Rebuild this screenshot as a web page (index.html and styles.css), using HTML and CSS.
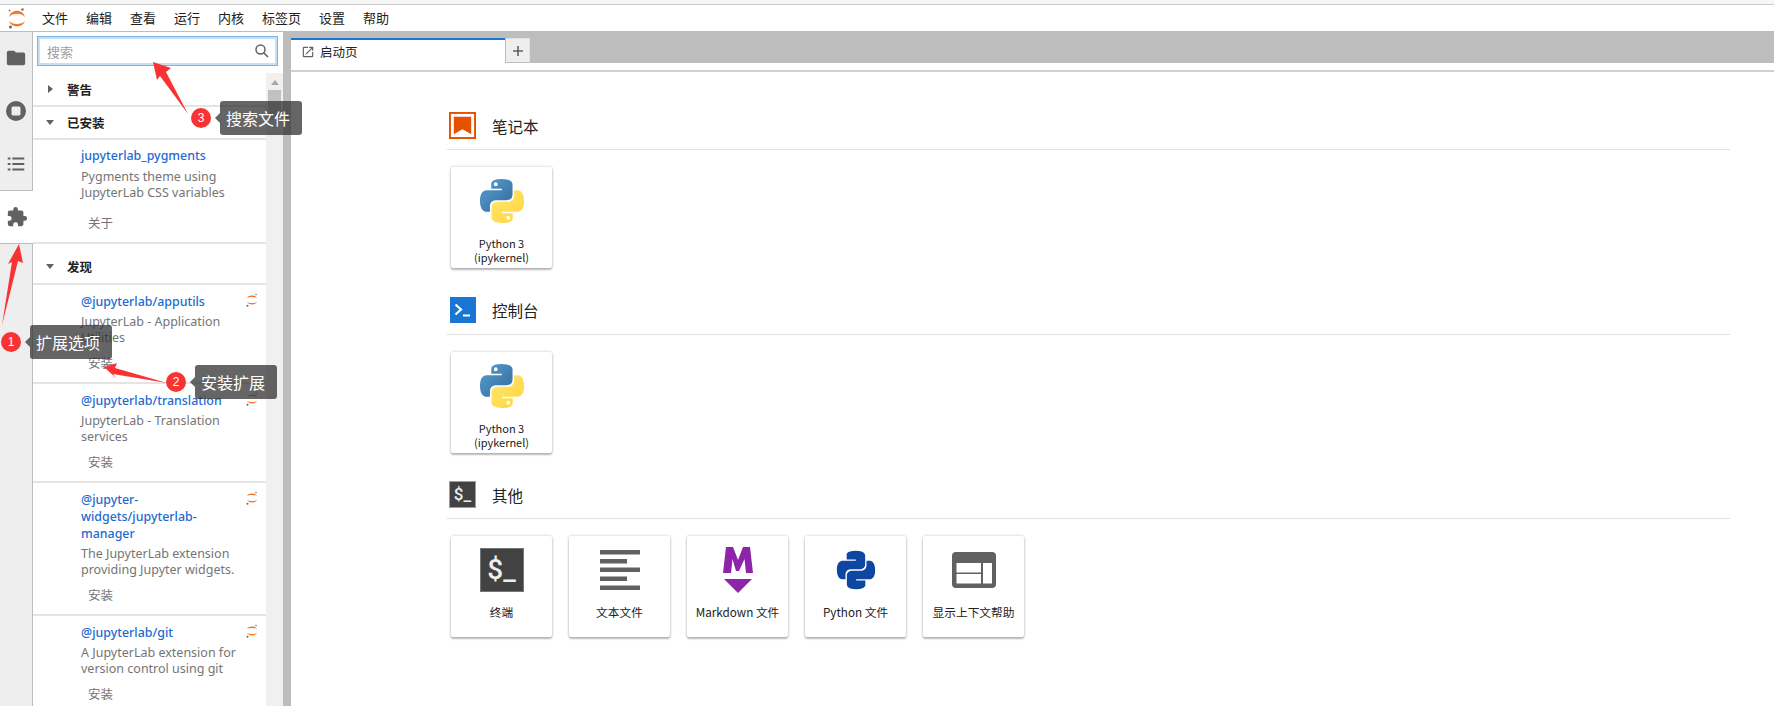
FILE: index.html
```html
<!DOCTYPE html>
<html lang="zh">
<head>
<meta charset="utf-8">
<title>JupyterLab</title>
<link rel="stylesheet" href="styles.css">
</head>
<body>
<div class="app">
  <header class="menubar">
    <svg class="logo" viewBox="0 0 18 22" width="18" height="22"><path d="M1 9C3 .5 15 .5 17 9C14 4.500 4 4.500 1 9Z" fill="#f37726"/><path d="M1 13C3 20 15 20 17 13C14 17 4 17 1 13Z" fill="#f37726"/><circle cx="14.500" cy="1.500" r="1.300" fill="#777"/><circle cx="2.500" cy="19" r="1.500" fill="#666"/><circle cx="1.500" cy="2.500" r="1" fill="#888"/></svg>
    <nav class="menus"><span>文件</span><span>编辑</span><span>查看</span><span>运行</span><span>内核</span><span>标签页</span><span>设置</span><span>帮助</span></nav>
  </header>
  <div class="body">
    <aside class="rail">
      <div class="rail-tabs">
        <div class="rail-item"><svg viewBox="0 0 24 24" width="22" height="22"><path fill="#616161" d="M10 4H4a2 2 0 0 0-2 2v12a2 2 0 0 0 2 2h16a2 2 0 0 0 2-2V8a2 2 0 0 0-2-2h-8z"/></svg></div>
        <div class="rail-item"><svg viewBox="0 0 24 24" width="24" height="24"><path fill="#616161" fill-rule="evenodd" d="M12 2a10 10 0 1 0 0 20 10 10 0 0 0 0-20zM9 7.500h6A1.500 1.500 0 0 1 16.500 9v6a1.500 1.500 0 0 1-1.500 1.500H9A1.500 1.500 0 0 1 7.500 15V9A1.500 1.500 0 0 1 9 7.500z"/></svg></div>
        <div class="rail-item"><svg viewBox="0 0 24 24" width="22" height="22"><path fill="#616161" d="M3 5h3v2H3zM8 5h13v2H8zM3 11h3v2H3zM8 11h13v2H8zM3 17h3v2H3zM8 17h13v2H8z"/></svg></div>
      </div>
      <div class="rail-item rail-active"><svg viewBox="0 0 24 24" width="22" height="22"><path fill="#616161" d="M20.500 11H19V7a2 2 0 0 0-2-2h-4V3.500a2.500 2.500 0 0 0-5 0V5H4a2 2 0 0 0-2 2v3.800h1.500a2.700 2.700 0 0 1 0 5.400H2V20a2 2 0 0 0 2 2h3.800v-1.500a2.700 2.700 0 0 1 5.400 0V22H17a2 2 0 0 0 2-2v-4h1.500a2.500 2.500 0 0 0 0-5z"/></svg></div>
      <div class="rail-rest"></div>
    </aside>

    <section class="panel">
      <div class="search-wrap">
        <div class="search">
          <span class="search-ph">搜索</span>
          <svg viewBox="0 0 24 24" width="18" height="18"><path fill="none" stroke="#616161" stroke-width="2" d="M10 4a6 6 0 1 0 0 12 6 6 0 0 0 0-12zM14.500 14.500L20 20"/></svg>
        </div>
      </div>
      <div class="scroller">
        <div class="list">
          <div class="sec sec-top"><i class="tri tri-r"></i>警告</div>
          <div class="sec"><i class="tri tri-d"></i>已安装</div>
          <article class="ext ext-first">
            <a class="ext-name">jupyterlab_pygments</a>
            <p class="ext-desc">Pygments theme using JupyterLab CSS variables</p>
            <span class="ext-btn">关于</span>
          </article>
          <div class="sec sec-tall"><i class="tri tri-d"></i>发现</div>
          <article class="ext">
            <a class="ext-name">@jupyterlab/apputils</a>
            <svg class="mini" viewBox="0 0 12 14"><use href="#mini"/></svg>
            <p class="ext-desc">JupyterLab - Application Utilities</p>
            <span class="ext-btn">安装</span>
          </article>
          <article class="ext">
            <a class="ext-name">@jupyterlab/translation</a>
            <svg class="mini" viewBox="0 0 12 14"><use href="#mini"/></svg>
            <p class="ext-desc">JupyterLab - Translation services</p>
            <span class="ext-btn">安装</span>
          </article>
          <article class="ext">
            <a class="ext-name">@jupyter-widgets/jupyterlab-manager</a>
            <svg class="mini" viewBox="0 0 12 14"><use href="#mini"/></svg>
            <p class="ext-desc">The JupyterLab extension providing Jupyter widgets.</p>
            <span class="ext-btn">安装</span>
          </article>
          <article class="ext">
            <a class="ext-name">@jupyterlab/git</a>
            <svg class="mini" viewBox="0 0 12 14"><use href="#mini"/></svg>
            <p class="ext-desc">A JupyterLab extension for version control using git</p>
            <span class="ext-btn">安装</span>
          </article>
        </div>
        <div class="scrollbar"><i class="sb-up"></i><b class="sb-thumb"></b></div>
      </div>
    </section>
    <div class="splitter"></div>

    <main class="main">
      <div class="tabbar">
        <div class="tab">
          <svg viewBox="0 0 24 24" width="14" height="14"><path fill="#616161" d="M19 19H5V5h7V3H5a2 2 0 0 0-2 2v14a2 2 0 0 0 2 2h14a2 2 0 0 0 2-2v-7h-2v7zM14 3v2h3.600l-9.800 9.800 1.400 1.400L19 6.400V10h2V3h-7z"/></svg>
          <span>启动页</span>
        </div>
        <div class="tab-add"><svg viewBox="0 0 12 12" width="12" height="12"><path stroke="#616161" stroke-width="1.600" d="M6 1v10M1 6h10"/></svg></div>
      </div>
      <div class="launcher">
        <section class="group">
          <header class="group-head">
            <svg class="kernel-ico" viewBox="0 0 28 28"><rect x="1" y="1" width="26" height="26" fill="#fff" stroke="#e65100" stroke-width="2"/><path fill="#e65100" d="M5 5h18v18l-9-5-9 5z"/></svg>
            <h2>笔记本</h2>
          </header>
          <div class="cards">
            <div class="card"><svg class="py" viewBox="0 0 48 48"><use href="#py"/></svg><span class="card-label label-two">Python 3<br>(ipykernel)</span></div>
          </div>
        </section>
        <section class="group">
          <header class="group-head">
            <svg class="kernel-ico ico-blue" viewBox="0 0 26 26"><rect width="26" height="26" fill="#1976d2"/><path fill="none" stroke="#fff" stroke-width="2.200" d="M5.500 7.500l5.500 5-5.500 5"/><path stroke="#fff" stroke-width="2" d="M13 18.500h7"/></svg>
            <h2>控制台</h2>
          </header>
          <div class="cards">
            <div class="card"><svg class="py" viewBox="0 0 48 48"><use href="#py"/></svg><span class="card-label label-two">Python 3<br>(ipykernel)</span></div>
          </div>
        </section>
        <section class="group">
          <header class="group-head">
            <div class="term-small"><span>$_</span></div>
            <h2>其他</h2>
          </header>
          <div class="cards">
            <div class="card"><div class="term-big"><span>$_</span></div><span class="card-label">终端</span></div>
            <div class="card">
              <svg class="ico ico-text" viewBox="0 0 44 44"><path fill="#616161" d="M2 2h40v4.500H2zM2 11h27v4.500H2zM2 19.500h40V24H2zM2 28.500h27V33H2zM2 37.500h40V42H2z"/></svg>
              <span class="card-label">文本文件</span>
            </div>
            <div class="card">
              <svg class="ico ico-md" viewBox="0 0 32 46"><path fill="#8e24aa" d="M1 26L4 0h7l5 13 5-13h7l3 26h-7l-1.500-14-5.500 12h-3L10.500 12 9 26z"/><path fill="#8e24aa" d="M2 32h28L16 46z"/></svg>
              <span class="card-label">Markdown 文件</span>
            </div>
            <div class="card">
              <svg class="ico ico-pyb" viewBox="0 0 48 48"><use href="#pyb"/></svg>
              <span class="card-label">Python 文件</span>
            </div>
            <div class="card">
              <svg class="ico ico-help" viewBox="0 0 44 36"><path fill="#616161" fill-rule="evenodd" d="M4 0h36a4 4 0 0 1 4 4v28a4 4 0 0 1-4 4H4a4 4 0 0 1-4-4V4a4 4 0 0 1 4-4zM4.500 11v9.500H29V11zM4.500 22v9.500H29V22zM31 11v20.500h9V11z"/></svg>
              <span class="card-label">显示上下文帮助</span>
            </div>
          </div>
        </section>
      </div>
    </main>
  </div>

  <svg class="arrows" viewBox="0 0 1774 706" width="1774" height="706">
    <g fill="#f83333">
      <path d="M153 62L171 68 166 72 188 114 160 76 157 80z"/>
      <path d="M19 244L23 263 18 261 2 325 12 262 8 264z"/>
      <path d="M104 367L117 363 115 368 167 383 113 374 116 378z"/>
    </g>
  </svg>
  <div class="note note-1"><b>1</b><span>扩展选项</span></div>
  <div class="note note-2"><b>2</b><span>安装扩展</span></div>
  <div class="note note-3"><b>3</b><span>搜索文件</span></div>
</div>

<svg class="defs" width="0" height="0">
  <defs>
    <g id="mini" fill="#f37726"><path d="M1 5C2.500 1.800 9.500 1.800 11 5 9 3.600 3 3.600 1 5zM1 9C2.500 12.200 9.500 12.200 11 9 9 10.400 3 10.400 1 9z"/><circle cx="1.500" cy="12.800" r="1" fill="#666"/><circle cx="10" cy="1.500" r=".8" fill="#777"/></g>
    <linearGradient id="pyblue" x1="0" y1="0" x2="1" y2="1"><stop offset="0" stop-color="#5a9fd4"/><stop offset="1" stop-color="#306998"/></linearGradient>
    <linearGradient id="pyyellow" x1="0" y1="0" x2="1" y2="1"><stop offset="0" stop-color="#ffe873"/><stop offset="1" stop-color="#ffd43b"/></linearGradient>
    <g id="py">
      <path fill="url(#pyblue)" fill-rule="evenodd" d="M23.600 1C12 1 12.800 6 12.800 6v5.300h11v1.600H8.400S1 12 1 23.800c0 11.800 6.500 11.400 6.500 11.400h3.900v-5.500s-.2-6.500 6.400-6.500h11s6.200.1 6.200-6V7S35.900 1 23.600 1zM17.500 4.500a2 2 0 1 1 0 4 2 2 0 0 1 0-4z"/>
      <path fill="url(#pyyellow)" fill-rule="evenodd" d="M24.400 47c11.600 0 10.800-5 10.800-5v-5.300h-11v-1.600h15.400S47 36 47 24.200c0-11.800-6.500-11.400-6.500-11.400h-3.900v5.500s.2 6.500-6.400 6.500h-11s-6.200-.1-6.200 6V41s-.9 6 11.400 6zM30.500 43.500a2 2 0 1 1 0-4 2 2 0 0 1 0 4z"/>
    </g>
    <g id="pyb" fill="#0d47a1">
      <path d="M23.600 1C12 1 12.800 6 12.800 6v5.300h11v1.600H8.400S1 12 1 23.800c0 11.800 6.500 11.400 6.500 11.400h3.900v-5.500s-.2-6.500 6.400-6.500h11s6.200.1 6.200-6V7S35.900 1 23.600 1z"/>
      <path d="M24.400 47c11.600 0 10.800-5 10.800-5v-5.300h-11v-1.600h15.400S47 36 47 24.200c0-11.800-6.500-11.400-6.500-11.400h-3.900v5.500s.2 6.500-6.400 6.500h-11s-6.200-.1-6.200 6V41s-.9 6 11.400 6z"/>
    </g>
  </defs>
</svg>
</body>
</html>
```

FILE: styles.css
```css
* { box-sizing: border-box; }
html, body { margin: 0; height: 100%; overflow: hidden; background: #fff; }
body { font-family: "Noto Sans CJK SC", "Noto Sans", sans-serif; color: #000; }
.defs { position: absolute; }
.app { position: relative; width: 1774px; height: 706px; display: flex; flex-direction: column; padding-top: 4px; overflow: hidden; }
.app::before { content: ""; position: absolute; left: 0; right: 0; top: 0; height: 4px; background: #f7f7f7; border-bottom: 1px solid #c8c8c8; }

.menubar { height: 27px; display: flex; align-items: center; padding: 0 0 0 8px; flex: none; }
.logo { display: block; flex: none; margin-top: 2px; }
.menus { display: flex; gap: 18px; margin-left: 16px; font-size: 13px; color: #212121; }

.body { flex: 1; display: flex; min-height: 0; border-top: 1px solid #bdbdbd; }

.rail { width: 33px; flex: none; display: flex; flex-direction: column; }
.rail-tabs { background: #eee; border-right: 1px solid #bdbdbd; border-bottom: 1px solid #bdbdbd; height: 159px; }
.rail-item { height: 53px; padding-bottom: 2px; display: flex; align-items: center; justify-content: center; }
.rail-active { height: 52px; padding-bottom: 0; }
.rail-rest { flex: 1; background: #eee; border-top: 1px solid #bdbdbd; border-right: 1px solid #bdbdbd; }

.panel { width: 250px; flex: none; display: flex; flex-direction: column; }
.search-wrap { height: 41px; padding: 4px 5px 0 4px; flex: none; }
.search { height: 30px; border: 1px solid #7fb3e0; box-shadow: inset 0 0 0 2px #c5e0f5; display: flex; align-items: center; justify-content: space-between; padding: 0 6px 0 9px; }
.search-ph { font-size: 13px; color: #9e9e9e; }

.scroller { flex: 1; display: flex; min-height: 0; overflow: hidden; }
.list { width: 233px; flex: none; }
.scrollbar { width: 17px; flex: none; background: #f0f0f0; display: flex; flex-direction: column; align-items: center; }
.sb-up { width: 0; height: 0; border: 4px solid transparent; border-top: 0; border-bottom: 5px solid #a6a6a6; margin: 7px 0 5px; }
.sb-thumb { display: block; width: 13px; height: 30px; background: #c1c1c1; }

.sec { height: 33px; display: flex; align-items: center; font-size: 12.500px; font-weight: 700; color: #212121; border-bottom: 2px solid #e4e4e4; }
.sec-top { height: 34px; }
.sec-tall { height: 41px; padding-top: 6px; }
.tri { width: 34px; flex: none; display: flex; justify-content: center; }
.tri::before { content: ""; width: 0; height: 0; border-style: solid; border-color: transparent; }
.tri-r::before { border-width: 4.500px 0 4.500px 5px; border-left-color: #616161; }
.tri-d::before { border-width: 5px 4.500px 0; border-top-color: #616161; }

.ext { position: relative; border-bottom: 2px solid #e4e4e4; padding: 8px 30px 11px 48px; }
.ext-first { padding: 7px 30px 11px 48px; }
.ext-first .ext-desc { margin-top: 5px; }
.ext-first .ext-btn { margin-top: 14px; }
.ext-name { display: block; font-family: "Noto Sans", sans-serif; font-size: 12.400px; line-height: 17px; font-weight: 500; color: #1e6bd0; }
.ext-desc { margin: 4px 0 0; font-family: "Noto Sans", sans-serif; font-size: 12.500px; line-height: 16px; color: #757575; }
.ext-btn { display: block; margin: 9px 0 0 7px; font-size: 12.500px; line-height: 16px; color: #757575; }
.mini { position: absolute; right: 8px; top: 8px; width: 12px; height: 14px; }

.splitter { width: 8px; flex: none; background: #bdbdbd; }

.main { flex: 1; display: flex; flex-direction: column; min-width: 0; }
.tabbar { height: 41px; margin-top: -1px; background: linear-gradient(#bdbdbd 32px, #fff 32px); display: flex; align-items: flex-start; flex: none; padding-top: 7px; border-bottom: 2px solid #d0d0d0; }
.tab { width: 214px; height: 32px; background: #fff; border-top: 2px solid #1976d2; display: flex; align-items: center; gap: 5px; padding: 0 0 7px 10px; font-size: 12.500px; color: #212121; }
.tab-add { width: 25px; height: 25px; background: #eee; border: 1px solid #e0e0e0; border-left-color: #bdbdbd; border-bottom-color: #bdbdbd; display: flex; align-items: center; justify-content: center; }

.launcher { flex: 1; padding: 40px 44px 0 156px; }
.group { height: 184.500px; }
.group-head { display: flex; align-items: center; height: 38px; padding: 0 0 10px 2px; gap: 16px; border-bottom: 1px solid #e0e0e0; }
.group-head h2 { margin: 0; font-size: 15.500px; font-weight: 400; color: #212121; }
.kernel-ico { width: 27px; height: 27px; display: block; flex: none; }
.ico-blue { width: 26px; height: 26px; margin-left: 1px; }
.term-small { width: 27px; height: 27px; background: #424242; border: 1px solid #9e9e9e; display: flex; align-items: center; justify-content: center; flex: none; }
.term-small span { font-family: "Roboto", sans-serif; font-size: 17px; line-height: 1; color: #eee; font-weight: 500; }

.cards { display: flex; gap: 17px; padding: 17px 0 0 4px; }
.card { width: 101px; height: 101px; background: #fff; border-radius: 2px; box-shadow: 0 2px 2px rgba(0,0,0,.24), 0 0 3px rgba(0,0,0,.24); display: flex; flex-direction: column; align-items: center; padding-top: 11px; }
.py { width: 46px; height: 46px; display: block; flex: none; }
.ico { display: block; flex: none; }
.ico-text { width: 44px; height: 44px; margin-top: 1px; }
.ico-md { width: 32px; height: 46px; margin-bottom: -1px; }
.ico-pyb { width: 40px; height: 40px; margin: 3px 0 2px; }
.ico-help { width: 44px; height: 36px; margin: 5px 0 4px; }
.card-label { font-size: 11.700px; line-height: 14px; color: #212121; margin-top: 13px; text-align: center; white-space: nowrap; }
.label-two { margin-top: 12px; font-size: 11px; }
.term-big { width: 44px; height: 44px; margin-top: 1px; background: #424242; border: 1px solid #757575; display: flex; align-items: center; justify-content: center; flex: none; }
.term-big span { font-family: "Roboto", sans-serif; font-size: 28px; line-height: 1; color: #eee; font-weight: 500; }

.arrows { position: absolute; left: 0; top: 0; pointer-events: none; }
.note { position: absolute; display: flex; align-items: center; }
.note b { width: 20px; height: 20px; border-radius: 50%; background: #f83333; color: #fff; font-family: "Liberation Sans", sans-serif; font-weight: 400; font-size: 12px; display: flex; align-items: center; justify-content: center; }
.note span { position: relative; margin-left: 9px; height: 34px; background: rgba(50,50,50,.75); color: #fff; border-radius: 3px; font-size: 16px; line-height: 34px; padding: 0 12px 0 6px; white-space: nowrap; }
.note span::before { content: ""; position: absolute; left: -5px; top: 12px; border: 5px solid transparent; border-left: 0; border-right-color: rgba(50,50,50,.75); }
.note-1 { left: 1px; top: 325px; }
.note-2 { left: 166px; top: 365px; }
.note-3 { left: 191px; top: 101px; }
```
